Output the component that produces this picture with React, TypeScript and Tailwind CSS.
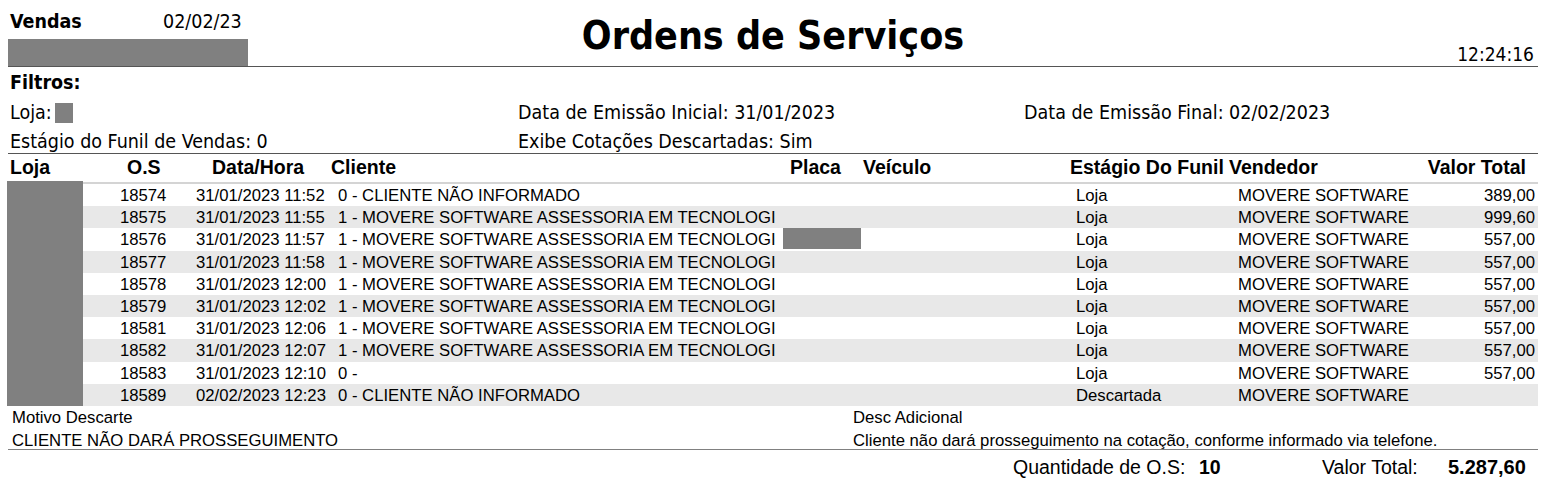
import React from "react";

interface Ordem {
  os: string;
  dataHora: string;
  cliente: string;
  placa?: boolean;
  estagio: string;
  vendedor: string;
  valor: string;
}

const movere = "1 - MOVERE SOFTWARE ASSESSORIA EM TECNOLOGI";

const ordens: Ordem[] = [
  { os: "18574", dataHora: "31/01/2023 11:52", cliente: "0 - CLIENTE NÃO INFORMADO", estagio: "Loja", vendedor: "MOVERE SOFTWARE", valor: "389,00" },
  { os: "18575", dataHora: "31/01/2023 11:55", cliente: movere, estagio: "Loja", vendedor: "MOVERE SOFTWARE", valor: "999,60" },
  { os: "18576", dataHora: "31/01/2023 11:57", cliente: movere, placa: true, estagio: "Loja", vendedor: "MOVERE SOFTWARE", valor: "557,00" },
  { os: "18577", dataHora: "31/01/2023 11:58", cliente: movere, estagio: "Loja", vendedor: "MOVERE SOFTWARE", valor: "557,00" },
  { os: "18578", dataHora: "31/01/2023 12:00", cliente: movere, estagio: "Loja", vendedor: "MOVERE SOFTWARE", valor: "557,00" },
  { os: "18579", dataHora: "31/01/2023 12:02", cliente: movere, estagio: "Loja", vendedor: "MOVERE SOFTWARE", valor: "557,00" },
  { os: "18581", dataHora: "31/01/2023 12:06", cliente: movere, estagio: "Loja", vendedor: "MOVERE SOFTWARE", valor: "557,00" },
  { os: "18582", dataHora: "31/01/2023 12:07", cliente: movere, estagio: "Loja", vendedor: "MOVERE SOFTWARE", valor: "557,00" },
  { os: "18583", dataHora: "31/01/2023 12:10", cliente: "0 -", estagio: "Loja", vendedor: "MOVERE SOFTWARE", valor: "557,00" },
  { os: "18589", dataHora: "02/02/2023 12:23", cliente: "0 - CLIENTE NÃO INFORMADO", estagio: "Descartada", vendedor: "MOVERE SOFTWARE", valor: "" },
];

const tahoma = "font-['DejaVu_Sans_Condensed','DejaVu_Sans',sans-serif]";

const App = () => {
  return (
    <div className="w-[1551px] h-[484px] overflow-hidden bg-white text-black">
      {/* cabeçalho */}
      <div className={`${tahoma} grid grid-cols-[1fr_auto_1fr] h-[66px] pl-[8px] pr-[13px]`}>
        <div className="flex flex-col">
          <div className="flex pt-[11px] pl-[2px] h-[39px] text-[19.5px] leading-[22px]">
            <span className="w-[153px] font-bold">Vendas</span>
            <span>02/02/23</span>
          </div>
          <div className="w-[240px] h-[27px] bg-[#808080]" />
        </div>
        <div className="pt-[14px] text-[39px] leading-[44px] font-bold whitespace-nowrap">
          Ordens de Serviços
        </div>
        <div className="flex justify-end pt-[43px] pr-[4px] text-[19px] leading-[22px]">12:24:16</div>
      </div>
      <div className="ml-[8px] w-[1530px] h-[1px] bg-[#555555]" />

      {/* filtros */}
      <div className={`${tahoma} pt-[5px] text-[19.5px] leading-[22px]`}>
        <div className="h-[30px] pl-[10px] font-bold">Filtros:</div>
        <div className="flex h-[29px]">
          <div className="flex w-[518px] pl-[10px]">
            <span>Loja:</span>
            <span className="ml-[3px] mt-[1px] w-[18px] h-[20px] bg-[#808080]" />
          </div>
          <div className="w-[506px]">Data de Emissão Inicial: 31/01/2023</div>
          <div>Data de Emissão Final: 02/02/2023</div>
        </div>
        <div className="flex h-[22px]">
          <div className="w-[518px] pl-[10px]">Estágio do Funil de Vendas: 0</div>
          <div>Exibe Cotações Descartadas: Sim</div>
        </div>
      </div>
      <div className="ml-[8px] w-[1530px] h-[1px] bg-[#555555]" />

      {/* tabela */}
      <div className="font-['Liberation_Sans',Arial,sans-serif]">
        <div className="flex h-[27px] pt-[2px] text-[19.5px] leading-[22px] font-bold whitespace-nowrap">
          <span className="w-[117px] ml-[10px]">Loja</span>
          <span className="w-[85px]">O.S</span>
          <span className="w-[119px]">Data/Hora</span>
          <span className="w-[459px]">Cliente</span>
          <span className="w-[73px]">Placa</span>
          <span className="w-[207px]">Veículo</span>
          <span className="w-[159px]">Estágio Do Funil</span>
          <span className="w-[150px]">Vendedor</span>
          <span className="w-[147px] text-right">Valor Total</span>
        </div>
        <div className="flex">
          <div className="ml-[7px] w-[76px] h-[225px] bg-[#808080]" />
          <div className="w-[1455px]">
            <div className="mt-[1px] h-[2px] bg-[#d4d4d4]" />
            {ordens.map((o, i) => (
              <div
                key={o.os}
                className={`flex h-[22.2px] text-[16.7px] leading-[20px] whitespace-nowrap ${i % 2 === 1 ? "bg-[#e8e8e8]" : "bg-white"}`}
              >
                <span className="w-[76px] ml-[37px] pt-[2px]">{o.os}</span>
                <span className="w-[142px] pt-[2px]">{o.dataHora}</span>
                <span className="w-[441px] overflow-hidden pt-[2px]">{o.cliente}</span>
                <span className="w-[82px] pl-[4px]">
                  {o.placa ? <span className="block w-[78px] h-[21px] bg-[#808080]" /> : null}
                </span>
                <span className="w-[215px]" />
                <span className="w-[162px] pt-[2px]">{o.estagio}</span>
                <span className="flex-1 pt-[2px]">{o.vendedor}</span>
                <span className="w-[120px] pr-[3px] pt-[2px] text-right">{o.valor}</span>
              </div>
            ))}
          </div>
        </div>

        {/* descarte */}
        <div className="flex h-[43px] text-[16.7px] leading-[23px] whitespace-nowrap">
          <div className="w-[853px] pl-[12px]">
            <div>Motivo Descarte</div>
            <div>CLIENTE NÃO DARÁ PROSSEGUIMENTO</div>
          </div>
          <div>
            <div>Desc Adicional</div>
            <div>Cliente não dará prosseguimento na cotação, conforme informado via telefone.</div>
          </div>
        </div>
        <div className="ml-[8px] w-[1530px] h-[1px] bg-[#808080]" />

        {/* totais */}
        <div className="flex pt-[6px] pl-[1013px] text-[19.5px] leading-[22px] whitespace-nowrap">
          <span className="w-[186px]">Quantidade de O.S:</span>
          <span className="w-[123px] font-bold">10</span>
          <span className="w-[126px]">Valor Total:</span>
          <span className="font-bold text-[20px]">5.287,60</span>
        </div>
      </div>
    </div>
  );
};

export default App;
